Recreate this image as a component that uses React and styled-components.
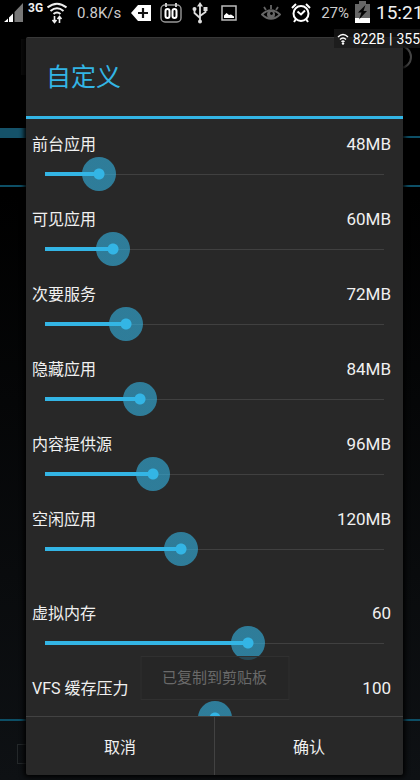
import React from 'react';
import styled, { createGlobalStyle } from 'styled-components';

const memorySettings = [
  { id: 'foreground', label: '前台应用', value: 48, max: 300, unit: 'MB' },
  { id: 'visible', label: '可见应用', value: 60, max: 300, unit: 'MB' },
  { id: 'secondary', label: '次要服务', value: 72, max: 300, unit: 'MB' },
  { id: 'hidden', label: '隐藏应用', value: 84, max: 300, unit: 'MB' },
  { id: 'provider', label: '内容提供源', value: 96, max: 300, unit: 'MB' },
  { id: 'empty', label: '空闲应用', value: 120, max: 300, unit: 'MB' },
];

const kernelSettings = [
  { id: 'swap', label: '虚拟内存', value: 60, max: 100, unit: '' },
  { id: 'vfs', label: 'VFS 缓存压力', value: 100, max: 200, unit: '' },
];

const SignalIcon = () => (
  <svg width="20" height="20" viewBox="0 0 20 20">
    <path d="M0 19 L4 15.500 V19Z M5 19 V14.500 L9 10.500 V19Z" fill="#fff" />
    <path d="M10.500 9 L19 0 V19 H10.500Z" fill="#777" />
  </svg>
);

const WifiIcon = () => (
  <svg width="20" height="22" viewBox="1 0 20 22" fill="none" stroke="#eee" strokeWidth="2">
    <path d="M1.500 5.500 Q11 -2 20.500 5.500 M4.500 9 Q11 3.500 17.500 9 M7.500 12 Q11 9 14.500 12" />
    <path d="M8.500 14 V20 M6.500 18 L8.500 20.500 L10.500 18 M13.500 21 V15 M11.500 17 L13.500 14.500 L15.500 17" strokeWidth="1.600" />
  </svg>
);

const TagIcon = () => (
  <svg width="22" height="18" viewBox="0 0 22 18">
    <path d="M7 1 H20 V17 H7 L0 9Z" fill="#fff" />
    <path d="M12 4 V14 M7 9 H17" stroke="#111" strokeWidth="2.200" />
  </svg>
);

const CounterIcon = () => (
  <svg width="22" height="22" viewBox="0 0 22 22" fill="none" stroke="#999">
    <rect x="1" y="3" width="20" height="17" rx="4" strokeWidth="1.400" />
    <path d="M6 1 V5 M16 1 V5" stroke="#ccc" strokeWidth="2" />
    <rect x="5.500" y="7" width="4" height="9" rx="2" stroke="#fff" strokeWidth="2" />
    <rect x="12.500" y="7" width="4" height="9" rx="2" stroke="#fff" strokeWidth="2" />
  </svg>
);

const UsbIcon = () => (
  <svg width="16" height="22" viewBox="0 0 16 22" fill="none" stroke="#ddd" strokeWidth="1.800">
    <path d="M8 3 V19 M2.500 7 V11 L8 16 M13.500 7 V10 L8 14" />
    <path d="M8 0 L11 4.500 H5Z" fill="#ddd" stroke="none" />
    <circle cx="8" cy="19.500" r="2" fill="#ddd" stroke="none" />
    <circle cx="2.500" cy="7" r="2" fill="#ddd" stroke="none" />
    <rect x="11.500" y="5" width="4" height="4" fill="#ddd" stroke="none" />
  </svg>
);

const PictureIcon = () => (
  <svg width="16" height="16" viewBox="0 0 16 16">
    <rect x="1" y="1" width="14" height="14" fill="none" stroke="#bbb" strokeWidth="1.500" />
    <path d="M3 13 V10.500 L5.500 8 L8 10 L10 9.500 L13 11.500 V13Z" fill="#fff" />
  </svg>
);

const EyeIcon = () => (
  <svg width="20" height="18" viewBox="0 0 20 18" fill="none" stroke="#666" strokeWidth="1.800">
    <path d="M1 10.500 Q10 2 19 10.500 Q10 19 1 10.500Z M10 5 V1 M5 6 L3 3 M15 6 L17 3" />
    <circle cx="10" cy="10.500" r="4" fill="#666" stroke="none" />
    <circle cx="10.500" cy="9.500" r="1.400" fill="#000" stroke="none" />
  </svg>
);

const AlarmIcon = () => (
  <svg width="20" height="20" viewBox="0 0 20 20" fill="none" stroke="#fff" strokeWidth="2">
    <circle cx="10" cy="10.500" r="7.500" />
    <path d="M1 5 L5 1 M19 5 L15 1 M5 16 L3 19 M15 16 L17 19 M6.500 8.500 L10 11.500 L14 7.500" />
  </svg>
);

const BatteryIcon = () => (
  <svg width="15" height="23" viewBox="0 0 15 23">
    <path d="M4 0 H11 V3 H15 V17 H0 V3 H4Z" fill="#666" />
    <rect y="17" width="15" height="5" fill="#fff" />
    <path d="M10.500 4 L3 11.500 H6.500 L4 18.500 L12 10 H8.500Z" fill="#050505" />
  </svg>
);

const BadgeWifiIcon = () => (
  <svg width="12" height="12" viewBox="0 0 12 12" fill="none" stroke="#fff" strokeWidth="1.400">
    <path d="M1 4 Q6 -1 11 4 M3 6.500 Q6 3.500 9 6.500 M4.500 8.800 Q6 7.300 7.500 8.800" />
    <circle cx="6" cy="10.500" r="1.200" fill="#fff" stroke="none" />
  </svg>
);

const SliderSetting = ({ id, label, initial, max, unit }) => {
  const [value, setValue] = React.useState(initial);

  return (
    <Setting>
      <SettingHeader>
        <label htmlFor={id}>{label}</label>
        <SettingValue htmlFor={id}>{value}{unit}</SettingValue>
      </SettingHeader>
      <Slider
        id={id}
        type="range"
        min="0"
        max={max}
        value={value}
        style={{ '--fill': value / max }}
        onChange={(e) => setValue(Number(e.target.value))}
      />
    </Setting>
  );
};

const SettingGroup = ({ settings }) => (
  <Group>
    {settings.map((s) => (
      <SliderSetting key={s.id} id={s.id} label={s.label} initial={s.value} max={s.max} unit={s.unit} />
    ))}
  </Group>
);

const App = () => (
  <Screen>
    <GlobalStyle />
    <StatusBar>
      <StatusGroup $gap={4}>
        <SignalIcon />
        <NetworkType>3G</NetworkType>
        <WifiIcon />
      </StatusGroup>
      <StatusText>0.8K/s</StatusText>
      <StatusGroup $gap={7}>
        <TagIcon />
        <CounterIcon />
      </StatusGroup>
      <StatusGroup $gap={13} $grow>
        <UsbIcon />
        <PictureIcon />
      </StatusGroup>
      <EyeIcon />
      <AlarmIcon />
      <StatusGroup $gap={6}>
        <StatusText>27%</StatusText>
        <BatteryIcon />
        <Clock>15:21</Clock>
      </StatusGroup>
    </StatusBar>

    {/* dimmed page behind the dialog */}
    <Backdrop>
      <AppBar>
        <AppLogo />
        <RoundAction />
      </AppBar>
      <TabStrip>
        <ActiveTab />
      </TabStrip>
      <TabContent />
      <BottomBar>
        <DimCheck />
      </BottomBar>
    </Backdrop>

    <Overlay>
      <Dialog role="dialog" aria-labelledby="dialog-title">
        <Title id="dialog-title">自定义</Title>
        <SettingList>
          <SettingGroup settings={memorySettings} />
          <SettingGroup settings={kernelSettings} />
        </SettingList>
        <Actions>
          <ActionButton type="button">取消</ActionButton>
          <ActionButton type="button">确认</ActionButton>
        </Actions>
        <Toast role="status">已复制到剪贴板</Toast>
      </Dialog>
    </Overlay>

    <SpeedBadge>
      <BadgeWifiIcon />
      <span>822B</span>
      <span>|</span>
      <span>355</span>
    </SpeedBadge>
  </Screen>
);

export default App;


const GlobalStyle = createGlobalStyle`
  * {
    box-sizing: border-box;
  }

  body {
    margin: 0;
    background: #000;
    color: #f0f0f0;
    font-family: Roboto, 'Noto Sans CJK SC', sans-serif;
    font-size: 16px;
  }

  svg {
    flex-shrink: 0;
  }
`;

const Screen = styled.div`
  position: relative;
  display: flex;
  flex-direction: column;
  height: 100vh;
  overflow: hidden;
  background: linear-gradient(#000 25%, #0e1114);
`;

const StatusBar = styled.header`
  display: flex;
  align-items: center;
  height: 25px;
  padding-left: 4px;
  gap: 10px;
  background: #000;
  white-space: nowrap;
`;

const StatusGroup = styled.div`
  display: flex;
  flex: ${(props) => (props.$grow ? 1 : 'none')};
  align-items: center;
  gap: ${(props) => props.$gap}px;
`;

const NetworkType = styled.span`
  align-self: flex-start;
  font-size: 12px;
  line-height: 12px;
  font-weight: 700;
`;

const StatusText = styled.span`
  font-size: 15px;
  color: #ccc;
`;

const Clock = styled.time`
  width: 44px;
  font-size: 19px;
`;

const Backdrop = styled.div`
  display: flex;
  flex: 1;
  flex-direction: column;
`;

const AppBar = styled.div`
  display: flex;
  justify-content: space-between;
  height: 103px;
  padding: 14px 8px 0 21px;
`;

const AppLogo = styled.div`
  width: 36px;
  height: 36px;
  background: #0b0b0b;
`;

const RoundAction = styled.div`
  width: 24px;
  height: 24px;
  margin-top: 6px;
  border: 2px solid #444;
  border-radius: 50%;
`;

const TabStrip = styled.div`
  display: flex;
  align-items: flex-end;
  height: 10px;
  border-bottom: 2px solid #0d4f66;
`;

const ActiveTab = styled.div`
  width: 33%;
  height: 10px;
  margin-bottom: -2px;
  background: #155269;
`;

const TabContent = styled.div`
  flex: 1;
  margin-top: 47px;
  border-top: 2px solid #0d4f66;
  border-bottom: 2px solid #0d4f66;
`;

const BottomBar = styled.div`
  height: 59px;
  padding: 23px 17px;
`;

const DimCheck = styled.div`
  width: 20px;
  height: 20px;
  border: 1px solid #24282a;
`;

const Overlay = styled.div`
  position: absolute;
  inset: 0;
  display: flex;
  padding: 37px 17px 5px 26px;
`;

const Dialog = styled.section`
  position: relative;
  display: flex;
  flex: 1;
  flex-direction: column;
  min-width: 0;
  background: #282828;
  border-top: 1px solid #383838;
  border-radius: 2px;
  box-shadow: 0 0 5px 2px #000;
`;

const Title = styled.h1`
  margin: 0;
  padding: 2px 20px 0;
  font-size: 25px;
  line-height: 76px;
  font-weight: 400;
  color: #33b5e5;
  border-bottom: 3px solid #33b5e5;
`;

const SettingList = styled.div`
  flex: 1;
  min-height: 0;
  padding: 13px 2px 0;
  overflow-y: auto;
  scrollbar-width: none;
`;

const Group = styled.div`
  & + & {
    margin-top: 19px;
  }
`;

const Setting = styled.div`
  height: 75px;
`;

const SettingHeader = styled.div`
  display: flex;
  justify-content: space-between;
  height: 25px;
  padding: 0 10px 0 4px;
  line-height: 25px;
`;

const SettingValue = styled.output`
  font-size: 17px;
  line-height: 24px;
`;

const Slider = styled.input`
  display: block;
  appearance: none;
  width: 100%;
  height: 34px;
  margin: 0;
  background: none;
  cursor: pointer;

  /* the line is inset by half a thumb on both sides */
  &::-webkit-slider-runnable-track {
    height: 34px;
    background:
      linear-gradient(#33b5e5, #33b5e5) 17px 50% / calc((100% - 34px) * var(--fill)) 4px no-repeat,
      linear-gradient(#404040, #404040) 17px 50% / calc(100% - 34px) 1px no-repeat;
  }

  &::-webkit-slider-thumb {
    appearance: none;
    width: 34px;
    height: 34px;
    border-radius: 50%;
    background: radial-gradient(circle, #33b5e5 5px, rgba(51, 181, 229, 0.6) 6px);
  }
`;

const Actions = styled.footer`
  display: flex;
  height: 59px;
  border-top: 1px solid #424242;
`;

const ActionButton = styled.button`
  flex: 1;
  padding: 0;
  border: 0;
  background: none;
  color: #f0f0f0;
  font: inherit;
  cursor: pointer;

  & + & {
    border-left: 1px solid #424242;
  }
`;

const SpeedBadge = styled.div`
  position: absolute;
  top: 29px;
  right: 0;
  display: flex;
  align-items: center;
  gap: 4px;
  height: 19px;
  padding-left: 3px;
  background: rgba(24, 24, 24, 0.7);
  color: #fff;
  font-size: 14px;
  white-space: nowrap;
`;

const Toast = styled.div`
  position: absolute;
  left: 50%;
  bottom: 75px;
  transform: translateX(-50%);
  padding: 0 21px;
  border: 1px solid #303030;
  background: rgba(36, 36, 36, 0.6);
  color: #6a6a6a;
  font-size: 15px;
  line-height: 42px;
  white-space: nowrap;
`;
